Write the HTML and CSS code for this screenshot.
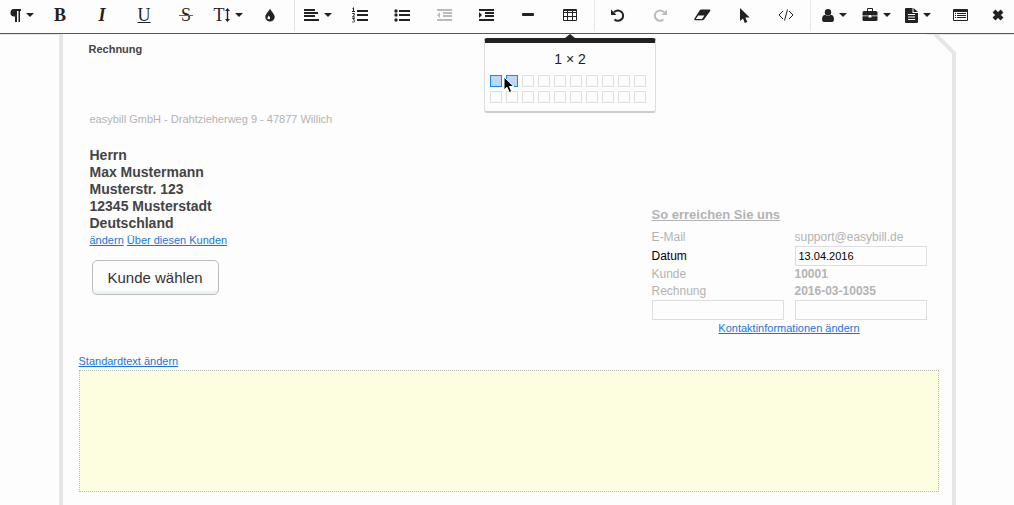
FILE: index.html
```html
<!DOCTYPE html>
<html lang="de">
<head>
  <meta charset="UTF-8">
  <meta name="viewport" content="width=device-width, initial-scale=1.0">
  <title>Rechnung</title>
  <link rel="stylesheet" href="styles.css">
</head>
<body>
  <div class="toolbar" role="toolbar">
    <button class="tool tool-first" aria-label="Absatz">
      <svg width="11" height="13" viewBox="0 0 11 13"><path d="M4.500 0H11v2h-1v11H8.500V2H7v11H5V7.500H4A3.700 3.700 0 0 1 4.500 0z"/></svg>
      <span class="caret"></span>
    </button>
    <button class="tool letter bold">B</button>
    <button class="tool letter italic">I</button>
    <button class="tool letter underline">U</button>
    <button class="tool letter strike">S</button>
    <button class="tool letter size" aria-label="Schriftgröße">T<svg width="5" height="14" viewBox="0 0 5 14"><path d="M2.500 0L5 3H3.200v8H5l-2.500 3L0 11h1.800V3H0z"/></svg>
      <span class="caret"></span>
    </button>
    <button class="tool" aria-label="Farbe">
      <svg width="10" height="14" viewBox="0 0 10 14"><path fill-rule="evenodd" d="M5 .5c.8 2.800 4.700 5.300 4.700 8.500a4.700 4.600 0 0 1-9.400 0C.3 5.800 4.200 3.300 5 .5zM3.700 7.500C3.400 8.400 2.500 8.900 2.500 9.900a1.300 1.300 0 0 0 2.600 0c0-1-1.100-1.500-1.400-2.400z"/></svg>
    </button>
    <span class="divider"></span>
    <button class="tool" aria-label="Ausrichtung">
      <svg width="15" height="12" viewBox="0 0 15 12"><path d="M0 0h11v2H0zM0 3h14v2H0zM0 6h11v2H0zM0 10h15v2H0z"/></svg>
      <span class="caret"></span>
    </button>
    <button class="tool" aria-label="Nummerierte Liste">
      <svg width="16" height="16" viewBox="0 0 16 16"><path d="M5 3h11v2H5zM5 7h11v2H5zM5 12h11v2H5z"/><path class="line" d="M.5 1.500l1-.8V4M0 4.500h3M.3 6.500h2v1.500L.5 10h2.500M.3 11.500h2.200l-1 1.400q1.300.2 1 1.500-.6 1-2.200.5"/></svg>
    </button>
    <button class="tool" aria-label="Liste">
      <svg width="16" height="14" viewBox="0 0 16 14"><path d="M5 2h11v2H5zM5 6h11v2H5zM5 11h11v2H5z"/><circle cx="2" cy="3" r="1.700"/><circle cx="2" cy="7" r="1.700"/><circle cx="2" cy="12" r="1.700"/></svg>
    </button>
    <button class="tool" disabled aria-label="Einzug verkleinern">
      <svg width="15" height="12" viewBox="0 0 15 12"><path d="M0 0h15v2H0zM6 3h9v2H6zM6 6h9v2H6zM0 10h15v2H0zM3 3v6L0 6z"/></svg>
    </button>
    <button class="tool" aria-label="Einzug vergrößern">
      <svg width="15" height="12" viewBox="0 0 15 12"><path d="M0 0h15v2H0zM6 3h9v2H6zM6 6h9v2H6zM0 10h15v2H0zM0 3v6l3-3z"/></svg>
    </button>
    <button class="tool" aria-label="Linie">
      <svg width="12" height="14" viewBox="0 0 12 14"><rect y="5" width="12" height="3" rx="1"/></svg>
    </button>
    <div class="tool-menu">
      <button class="tool" aria-label="Tabelle">
        <svg width="14" height="12" viewBox="0 0 14 12"><path fill-rule="evenodd" d="M1 0h12a1 1 0 0 1 1 1v10a1 1 0 0 1-1 1H1a1 1 0 0 1-1-1V1a1 1 0 0 1 1-1zM1 2v1h3V2zM5 2v1h4V2zM10 2v1h3V2zM1 4v3h3V4zM5 4v3h4V4zM10 4v3h3V4zM1 8v3h3V8zM5 8v3h4V8zM10 8v3h3V8z"/></svg>
      </button>
      <div class="popup">
        <div class="popup-size">1 × 2</div>
        <div class="cells">
          <span class="cell selected"></span><span class="cell selected"></span><span class="cell"></span><span class="cell"></span><span class="cell"></span><span class="cell"></span><span class="cell"></span><span class="cell"></span><span class="cell"></span><span class="cell"></span>
          <span class="cell"></span><span class="cell"></span><span class="cell"></span><span class="cell"></span><span class="cell"></span><span class="cell"></span><span class="cell"></span><span class="cell"></span><span class="cell"></span><span class="cell"></span>
        </div>
        <svg class="pointer" width="12" height="18" viewBox="0 0 12 18"><path d="M1 1v13l3-2.700L6.200 16.500l2.500-1L6.500 10.500h4.300z"/></svg>
      </div>
    </div>
    <span class="divider"></span>
    <button class="tool" aria-label="Rückgängig">
      <svg width="14" height="13" viewBox="0 0 14 13"><path d="M0 .5l5.500 5.500H0z"/><path class="arc" d="M3 3.200A5.200 5.200 0 1 1 3.500 10.500"/></svg>
    </button>
    <button class="tool" disabled aria-label="Wiederholen">
      <svg width="14" height="13" viewBox="0 0 14 13"><path d="M14 .5L8.500 6H14z"/><path class="arc" d="M11 3.200A5.200 5.200 0 1 0 10.500 10.500"/></svg>
    </button>
    <button class="tool" aria-label="Formatierung löschen">
      <svg width="17" height="12" viewBox="0 0 17 12"><path fill-rule="evenodd" d="M7 .5h8.500q1.200.2.700 1.500L10 10.500q-.5.700-1.500.7H1Q-.1 11 .5 9.500L5.800 1.200Q6.200.5 7 .5zM4.200 6.500L1.800 10H8l2.400-3.500z"/></svg>
    </button>
    <button class="tool" aria-label="Auswahl">
      <svg width="11" height="15" viewBox="0 0 11 15"><path d="M1 0v13l3-2.600L5.800 15l2.500-1-1.900-4.500h4.300z"/></svg>
    </button>
    <button class="tool" aria-label="Quelltext">
      <svg width="16" height="12" viewBox="0 0 16 12"><path class="line" d="M5 2L1 6l4 4M11 2l4 4-4 4M9.500.5l-3 11"/></svg>
    </button>
    <span class="divider"></span>
    <button class="tool" aria-label="Kunde">
      <svg width="12" height="13" viewBox="0 0 12 13"><circle cx="6" cy="3.200" r="3.200"/><path d="M3 5.800q3 2 6 0 3 .5 3 4.700 0 2.500-2 2.500H2q-2 0-2-2.500Q0 6.300 3 5.800z"/></svg>
      <span class="caret"></span>
    </button>
    <button class="tool" aria-label="Firma">
      <svg width="16" height="14" viewBox="0 0 16 14"><path fill-rule="evenodd" d="M5 3V1q0-1 1-1h4q1 0 1 1v2h3q1.500 0 1.500 1.500V7.500H9V7H7v.5H.5v-3Q.5 3 2 3zm1 0h4V1H6zM.5 8.300H6.500V9.500h3V8.300h6V12q0 1-1.500 1H2Q.5 13 .5 12z"/></svg>
      <span class="caret"></span>
    </button>
    <button class="tool" aria-label="Dokument">
      <svg width="13" height="15" viewBox="0 0 13 15"><path fill-rule="evenodd" d="M1 0h6.500v5H13v9q0 1-1 1H1q-1 0-1-1V1q0-1 1-1zM8.500 0L13 4H8.500zM3 6v1h7V6zM3 8.500v1h7v-1zM3 11v1h7v-1z"/></svg>
      <span class="caret"></span>
    </button>
    <button class="tool" aria-label="Positionen">
      <svg width="15" height="12" viewBox="0 0 15 12"><path fill-rule="evenodd" d="M1 0h13q1 0 1 1v10q0 1-1 1H1q-1 0-1-1V1q0-1 1-1zM1 3v8h13V3zM2 4h1v1H2zM4 4h9v1H4zM2 6h1v1H2zM4 6h9v1H4zM2 8h1v1H2zM4 8h9v1H4z"/></svg>
    </button>
    <button class="tool tool-last" aria-label="Schließen">
      <svg width="12" height="12" viewBox="0 0 12 12"><path class="cross" d="M2 2l8 8M10 2l-8 8"/></svg>
    </button>
  </div>

  <div class="paper">
    <svg class="corner" width="29" height="24" viewBox="0 0 29 24"><path class="corner-bg" d="M5 0h24v24h-2v-5L8 0z"/><path class="corner-edge" d="M0 0h29v1H0z"/><path class="corner-line" d="M7 -1L27 19v6"/></svg>
    <h1>Rechnung</h1>

    <div class="letterhead">
      <div class="customer">
        <div class="sender">easybill GmbH - Drahtzieherweg 9 - 47877 Willich</div>
        <address>
          Herrn<br>
          Max Mustermann<br>
          Musterstr. 123<br>
          12345 Musterstadt<br>
          Deutschland
        </address>
        <div class="links"><a href="#">ändern</a> <a href="#">Über diesen Kunden</a></div>
        <button class="choose">Kunde wählen</button>
      </div>

      <div class="contact">
        <h2>So erreichen Sie uns</h2>
        <table>
          <tr><td>E-Mail</td><td>support@easybill.de</td></tr>
          <tr class="editable"><td><label for="date">Datum</label></td><td><input id="date" type="text" value="13.04.2016"></td></tr>
          <tr><td>Kunde</td><td><b>10001</b></td></tr>
          <tr><td>Rechnung</td><td><b>2016-03-10035</b></td></tr>
          <tr><td><input type="text" aria-label="Bezeichnung"></td><td><input type="text" aria-label="Wert"></td></tr>
        </table>
        <div class="contact-link"><a href="#">Kontaktinformationen ändern</a></div>
      </div>
    </div>

    <div class="links"><a href="#">Standardtext ändern</a></div>
    <textarea class="editor" aria-label="Standardtext"></textarea>
  </div>
</body>
</html>
```

FILE: styles.css
```css
* {
  box-sizing: border-box;
}
body {
  margin: 0;
  background: #fdfdfd;
  color: #444;
  font-family: "Liberation Sans", Arial, sans-serif;
  font-size: 12px;
  min-height: 100vh;
  display: flex;
  flex-direction: column;
}
a {
  color: #1c75d8;
}
button {
  font-family: inherit;
  cursor: pointer;
}

/* toolbar */
.toolbar {
  display: flex;
  height: 34px;
  border-bottom: 1px solid #3b5998;
  box-shadow: 0 1px #e6e6e6;
}
.tool {
  display: flex;
  flex: none;
  align-items: center;
  justify-content: center;
  width: 42px;
  height: 30px;
  padding: 0;
  border: 0;
  background: none;
  color: #222;
}
.tool:disabled {
  color: #bbb;
}
.tool-first {
  width: 39px;
  padding-left: 4px;
}
.tool-last {
  flex: 1;
}
.tool svg {
  flex: none;
  fill: currentColor;
}
.tool .line,
.tool .arc,
.tool .cross {
  fill: none;
  stroke: currentColor;
}
.tool .arc {
  stroke-width: 2;
}
.tool .cross {
  stroke-width: 4;
}
.caret {
  margin-left: 5px;
  border: 4px solid transparent;
  border-top-color: currentColor;
  border-bottom: 0;
}
.letter {
  font-family: "Liberation Serif", "Times New Roman", serif;
  font-size: 18px;
}
.bold {
  font-weight: bold;
}
.italic {
  font-style: italic;
  font-weight: bold;
}
.underline {
  text-decoration: underline;
}
.strike {
  position: relative;
}
.strike::after {
  content: "";
  position: absolute;
  top: 15px;
  left: 14px;
  right: 14px;
  height: 1px;
  background: #666;
}
.divider {
  width: 1px;
  height: 31px;
  margin: 0 2px 0 3px;
  background: #e4e4e4;
}

/* table popup */
.tool-menu {
  position: relative;
}
.popup {
  position: absolute;
  z-index: 2;
  top: 38px;
  left: 50%;
  width: 172px;
  height: 75px;
  margin-left: -86px;
  padding: 8px 5px;
  border: 1px solid #ddd;
  border-top: 5px solid #222;
  border-bottom: 2px solid #ccc;
  border-radius: 3px;
  background: #fdfdfd;
}
.popup::before {
  content: "";
  position: absolute;
  top: -9px;
  left: 50%;
  margin-left: -5px;
  border: 5px solid transparent;
  border-bottom: 4px solid #222;
  border-top: 0;
}
.popup-size {
  margin-bottom: 8px;
  color: #222;
  font-size: 14px;
  line-height: 16px;
  text-align: center;
}
.cells {
  display: grid;
  grid-template-columns: repeat(10, 12px);
  gap: 4px;
}
.cell {
  height: 12px;
  border: 1px solid #ddd;
}
.selected {
  border-color: #1e88e5;
  background: #bbd9f7;
}
.pointer {
  position: absolute;
  top: 33px;
  left: 18px;
  fill: #000;
  stroke: #fff;
}

/* invoice */
.paper {
  position: relative;
  flex: 1;
  width: 100%;
  max-width: 897px;
  margin: 0 auto;
  padding: 7px 13px 13px 16px;
  border: solid #e6e6e6;
  border-width: 0 4px;
  background: #fdfdfd;
}
.corner {
  position: absolute;
  top: 0;
  right: -4px;
}
.corner-bg {
  fill: #fdfdfd;
}
.corner-edge {
  fill: #e6e6e6;
}
.corner-line {
  fill: none;
  stroke: #e6e6e6;
  stroke-width: 4;
}
h1 {
  margin: 0 0 54px 10px;
  font-size: 11px;
  line-height: 16px;
}
.letterhead {
  display: flex;
  align-items: flex-start;
  justify-content: space-between;
  padding: 0 12px 0 11px;
  margin-bottom: 16px;
}
.sender {
  margin-bottom: 20px;
  color: #b3b3b3;
  font-size: 11px;
  line-height: 16px;
}
address {
  font-size: 14px;
  font-style: normal;
  font-weight: bold;
  line-height: 17px;
}
.links,
.contact-link {
  font-size: 11px;
  line-height: 17px;
}
.choose {
  height: 35px;
  margin: 11px 2px 0;
  padding: 0 15px;
  border: 1px solid #bbb;
  border-radius: 5px;
  background: #fdfdfd;
  box-shadow: inset 0 -3px #e9f4f7;
  color: #333;
  font-size: 15px;
}
.contact {
  margin-top: 96px;
  color: #b3b3b3;
}
h2 {
  margin: 0 0 6px;
  font-size: 13px;
  line-height: 16px;
  text-decoration: underline;
}
table {
  border-collapse: collapse;
}
td {
  height: 17px;
  padding: 0;
  line-height: 17px;
}
td + td {
  padding-left: 11px;
}
td:first-child {
  width: 132px;
}
.editable {
  color: #000;
}
input {
  display: block;
  width: 132px;
  height: 20px;
  padding: 0 3px;
  border: 1px solid #ddd;
  background: #fdfdfd;
  color: #000;
  font-family: inherit;
  font-size: 11px;
}
.contact-link {
  text-align: center;
}
.editor {
  display: block;
  width: 100%;
  height: 122px;
  border: 1px dotted #bbb;
  background: #fdfddf;
  resize: none;
}
```
